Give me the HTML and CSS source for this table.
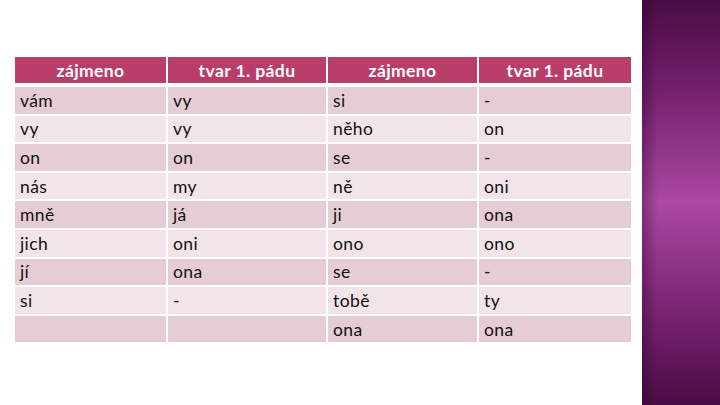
FILE: index.html
```
<!DOCTYPE html>
<html>
<head>
<meta charset="utf-8">
<link rel="stylesheet" href="styles.css">
</head>
<body>
<div class="slide">
  <div class="content">
    <div class="grid head">
      <div class="th">zájmeno</div><div class="th">tvar 1. pádu</div><div class="th">zájmeno</div><div class="th">tvar 1. pádu</div>
    </div>
    <div class="grid body">
      <div class="td odd">vám</div><div class="td odd">vy</div><div class="td odd">si</div><div class="td odd">-</div>
      <div class="td even">vy</div><div class="td even">vy</div><div class="td even">něho</div><div class="td even">on</div>
      <div class="td odd">on</div><div class="td odd">on</div><div class="td odd">se</div><div class="td odd">-</div>
      <div class="td even">nás</div><div class="td even">my</div><div class="td even">ně</div><div class="td even">oni</div>
      <div class="td odd">mně</div><div class="td odd">já</div><div class="td odd">ji</div><div class="td odd">ona</div>
      <div class="td even">jich</div><div class="td even">oni</div><div class="td even">ono</div><div class="td even">ono</div>
      <div class="td odd">jí</div><div class="td odd">ona</div><div class="td odd">se</div><div class="td odd">-</div>
      <div class="td even">si</div><div class="td even">-</div><div class="td even">tobě</div><div class="td even">ty</div>
      <div class="td odd"></div><div class="td odd"></div><div class="td odd">ona</div><div class="td odd">ona</div>
    </div>
  </div>
  <div class="bar"></div>
</div>
</body>
</html>
```
FILE: styles.css
```
html, body {
  margin: 0;
  padding: 0;
  background: #ffffff;
}
.slide {
  display: flex;
  width: 720px;
  height: 405px;
  overflow: hidden;
}
.content {
  width: 642px;
  padding: 57px 0 0 15px;
  box-sizing: border-box;
}
.grid {
  display: grid;
  grid-template-columns: 151px 158px 149px 152px;
  column-gap: 2px;
  row-gap: 2px;
  font-family: Lato, "Liberation Sans", sans-serif;
  font-size: 17.5px;
  letter-spacing: 0.4px;
}
.head {
  grid-template-rows: 26px;
  margin-bottom: 4px;
}
.body {
  grid-template-rows: repeat(9, 26.6px);
}
.th {
  background: #b93d69;
  color: #ffffff;
  font-weight: bold;
  display: flex;
  align-items: center;
  justify-content: center;
}
.td {
  color: #111111;
  display: flex;
  align-items: center;
  padding-left: 5px;
}
.odd { background: #e6ccd4; }
.even { background: #f2e5e9; }
.bar {
  width: 78px;
  height: 405px;
  background:
    linear-gradient(90deg, rgba(40,0,40,0.35) 0%, rgba(40,0,40,0) 20%),
    linear-gradient(180deg, #4a0c45 0%, #74206c 22%, #ab48a3 50%, #74206c 80%, #4a0c44 100%);
}
```
